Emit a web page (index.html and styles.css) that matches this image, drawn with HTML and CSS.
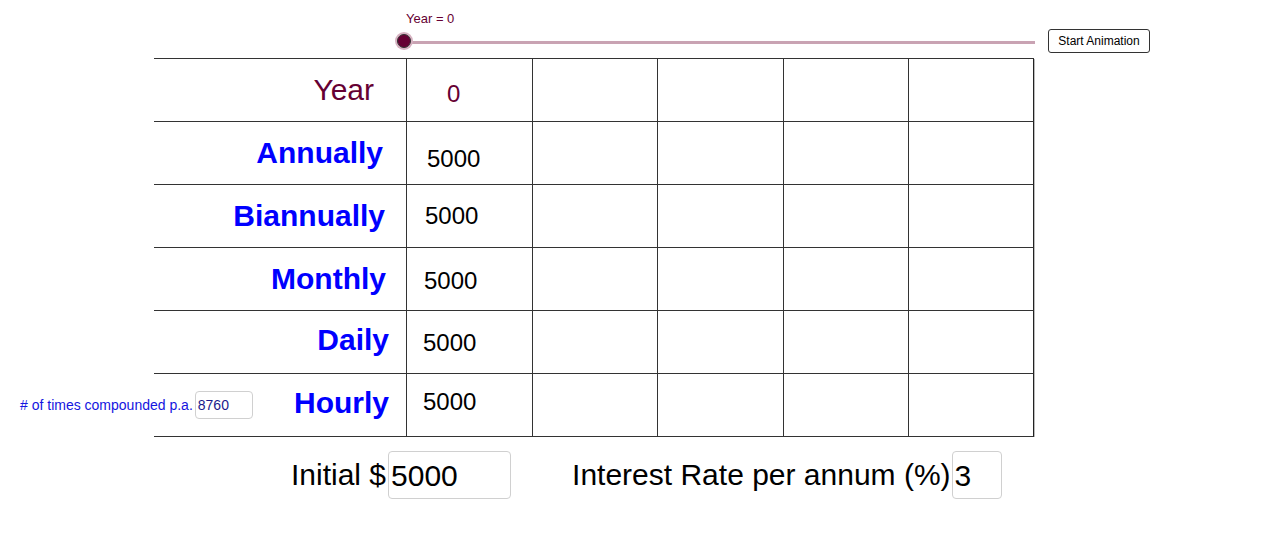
FILE: index.html
```html
<!DOCTYPE html>
<html lang="en">
<head>
  <meta charset="UTF-8" />
  <title>Compound Interest</title>
  <link rel="stylesheet" href="styles.css">
</head>
<body>
  <div class="applet">
    <div class="slider">
      <div class="slider-label">Year = 0</div>
      <div class="slider-track"><span class="knob"></span></div>
    </div>
    <button class="anim-btn">Start Animation</button>

    <div class="periods">
      <span>#&nbsp;of times compounded p.a.</span>
      <div class="box box-small">8760</div>
    </div>

    <div class="table">
      <div class="cell head year">Year</div>
      <div class="cell val year-val">0</div>
      <div class="cell"></div><div class="cell"></div><div class="cell"></div><div class="cell last"></div>

      <div class="cell head r1">Annually</div>
      <div class="cell val v1">5000</div>
      <div class="cell"></div><div class="cell"></div><div class="cell"></div><div class="cell last"></div>

      <div class="cell head r2">Biannually</div>
      <div class="cell val v2">5000</div>
      <div class="cell"></div><div class="cell"></div><div class="cell"></div><div class="cell last"></div>

      <div class="cell head r3">Monthly</div>
      <div class="cell val v3">5000</div>
      <div class="cell"></div><div class="cell"></div><div class="cell"></div><div class="cell last"></div>

      <div class="cell head r4">Daily</div>
      <div class="cell val v4">5000</div>
      <div class="cell"></div><div class="cell"></div><div class="cell"></div><div class="cell last"></div>

      <div class="cell head r5">Hourly</div>
      <div class="cell val v5">5000</div>
      <div class="cell"></div><div class="cell"></div><div class="cell"></div><div class="cell last"></div>
    </div>

    <div class="inputs">
      <span class="in-label">Initial $</span>
      <div class="box box-initial">5000</div>
      <span class="in-label rate-label">Interest Rate per annum (%)</span>
      <div class="box box-rate">3</div>
    </div>
  </div>
</body>
</html>
```

FILE: styles.css
```css
body {
  margin: 0;
  background: #fff;
  font-family: "Liberation Sans", Arial, sans-serif;
}
.applet {
  position: relative;
  width: 1280px;
  height: 546px;
  padding-top: 58px;
  box-sizing: border-box;
}

/* slider */
.slider {
  position: absolute;
  left: 405px;
  top: 11px;
  width: 630px;
}
.slider-label {
  margin-left: 1px;
  font-size: 13px;
  color: #660033;
}
.slider-track {
  position: relative;
  margin-top: 15px;
  height: 3px;
  background: #c9a3b3;
}
.knob {
  position: absolute;
  left: -8px;
  top: -7px;
  width: 12px;
  height: 12px;
  border-radius: 50%;
  background: #660033;
  border: 1px solid #333;
  box-shadow: 0 0 0 2px #d6b2c1;
}
.anim-btn {
  position: absolute;
  left: 1048px;
  top: 29px;
  width: 102px;
  height: 24px;
  padding: 0;
  background: #fff;
  border: 1px solid #333;
  border-radius: 3px;
  font-family: inherit;
  font-size: 12px;
  color: #000;
}

/* side input */
.periods {
  position: absolute;
  left: 20px;
  top: 391px;
  display: flex;
  align-items: center;
  font-size: 14px;
  color: #1515e0;
}
.box {
  box-sizing: border-box;
  border: 1px solid #d0d0d0;
  border-radius: 4px;
  background: #fff;
  color: #000;
}
.box-small {
  width: 58px;
  height: 28px;
  margin-left: 2px;
  padding: 5px 0 0 2px;
  font-size: 14px;
  color: #1a1a8c;
}

/* table */
.table {
  display: grid;
  grid-template-columns: 252px repeat(5, 1fr);
  grid-template-rows: repeat(6, 63px);
  width: 880px;
  margin-left: 154px;
  border-top: 1px solid #333;
}
.cell {
  box-sizing: border-box;
  border-bottom: 1px solid #333;
  border-left: 1px solid #333;
  display: flex;
  align-items: center;
}
.cell.last {
  border-right: 1px solid #222;
  box-shadow: 1px 0 0 #bbb;
}
.cell.head {
  border-left: none;
  justify-content: flex-end;
  font-size: 30px;
  font-weight: bold;
  color: #0000ff;
}
.cell.val {
  font-size: 24px;
  color: #000;
  padding-left: 18px;
}
.cell.year {
  font-weight: normal;
  color: #660033;
  padding-right: 32px;
}
.cell.year-val {
  color: #660033;
  padding-left: 40px;
  padding-top: 8px;
}
.cell.r1 { padding-right: 23px; }
.cell.r2 { padding-right: 21px; }
.cell.r3 { padding-right: 20px; }
.cell.r4 { padding-right: 17px; padding-bottom: 5px; }
.cell.r5 { padding-right: 17px; padding-bottom: 4px; }
.cell.v1 { padding-top: 12px; padding-left: 20px; }
.cell.v2 { padding-left: 18px; }
.cell.v3 { padding-top: 3px; padding-left: 17px; }
.cell.v4 { padding-top: 2px; padding-left: 16px; }
.cell.v5 { padding-bottom: 6px; padding-left: 16px; }

/* bottom inputs */
.inputs {
  display: flex;
  align-items: center;
  margin-top: 14px;
  padding-left: 291px;
  font-size: 30px;
  color: #000;
}
.box-initial {
  width: 123px;
  height: 48px;
  margin-left: 2px;
  padding: 7px 0 0 2px;
}
.rate-label {
  margin-left: 61px;
}
.box-rate {
  width: 50px;
  height: 48px;
  margin-left: 1px;
  padding: 7px 0 0 2px;
}
```
